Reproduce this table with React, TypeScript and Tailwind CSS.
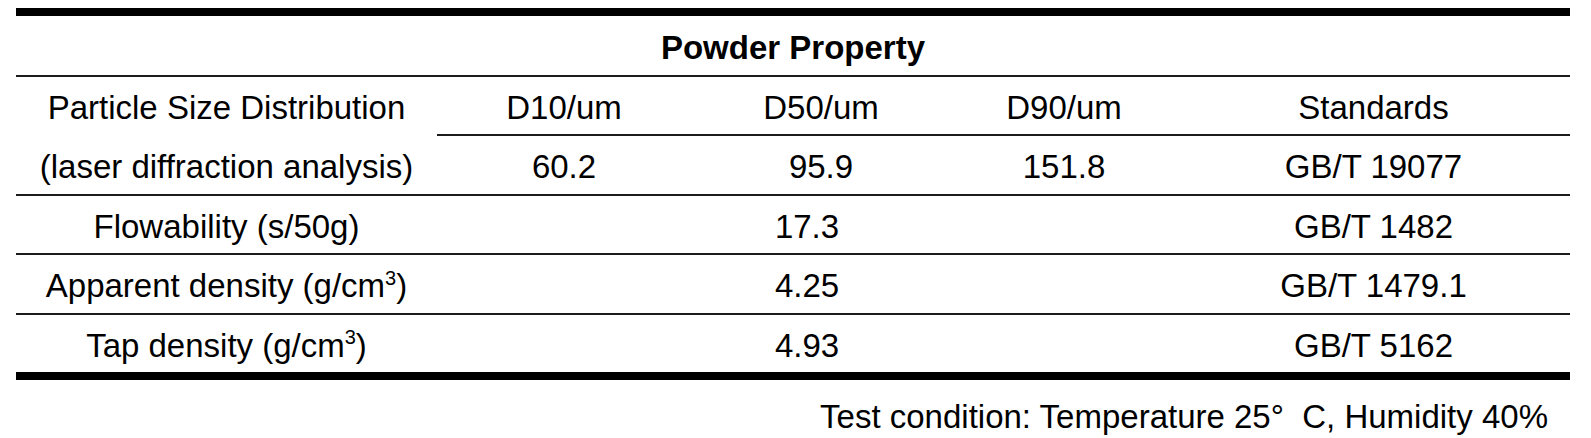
import clsx from "clsx";
import type { ReactNode } from "react";

function Cell({ children, className }: { children?: ReactNode; className?: string }) {
  return (
    <div className={clsx("flex items-center justify-center whitespace-nowrap pt-1", className)}>
      {children}
    </div>
  );
}

function Rule({ className }: { className?: string }) {
  return <div className={clsx("h-[2px] bg-[#1c1c1c]", className)} />;
}

const cm3 = (
  <>
    g/cm<sup className="text-[20px] top-[-0.42em]">3</sup>
  </>
);

const rows = [
  { label: <>Flowability (s/50g)</>, value: "17.3", std: "GB/T 1482" },
  { label: <>Apparent density ({cm3})</>, value: "4.25", std: "GB/T 1479.1" },
  { label: <>Tap density ({cm3})</>, value: "4.93", std: "GB/T 5162" },
];

export default function App() {
  return (
    <div className="w-[1591px] h-[438px] bg-white text-black font-['Liberation_Sans',Arial,sans-serif] text-[33px] leading-normal">
      <div className="ml-4 pt-2 w-[1554px]">
        {/* top heavy rule */}
        <div className="h-2 bg-black" />

        <Cell className="h-[59px] font-bold">Powder Property</Cell>
        <Rule />

        {/* particle size block */}
        <div className="grid grid-cols-[421px_254px_260px_226px_393px] grid-rows-[57px_2px_58px]">
          <Cell>Particle Size Distribution</Cell>
          <Cell>D10/um</Cell>
          <Cell>D50/um</Cell>
          <Cell>D90/um</Cell>
          <Cell>Standards</Cell>

          <div />
          <Rule className="col-span-4" />

          <Cell>(laser diffraction analysis)</Cell>
          <Cell>60.2</Cell>
          <Cell>95.9</Cell>
          <Cell>151.8</Cell>
          <Cell>GB/T 19077</Cell>
        </div>

        {rows.map((r, i) => (
          <div key={i}>
            <Rule />
            <div className={clsx("grid grid-cols-[421px_740px_393px]", i === 1 ? "h-[58px]" : "h-[57px]")}>
              <Cell>{r.label}</Cell>
              <Cell>{r.value}</Cell>
              <Cell>{r.std}</Cell>
            </div>
          </div>
        ))}

        {/* bottom heavy rule */}
        <div className="h-2 bg-black" />

        <div className="mt-3 pr-[22px] text-right whitespace-nowrap">
          Test condition: Temperature 25°&nbsp;&nbsp;C, Humidity 40%
        </div>
      </div>
    </div>
  );
}
